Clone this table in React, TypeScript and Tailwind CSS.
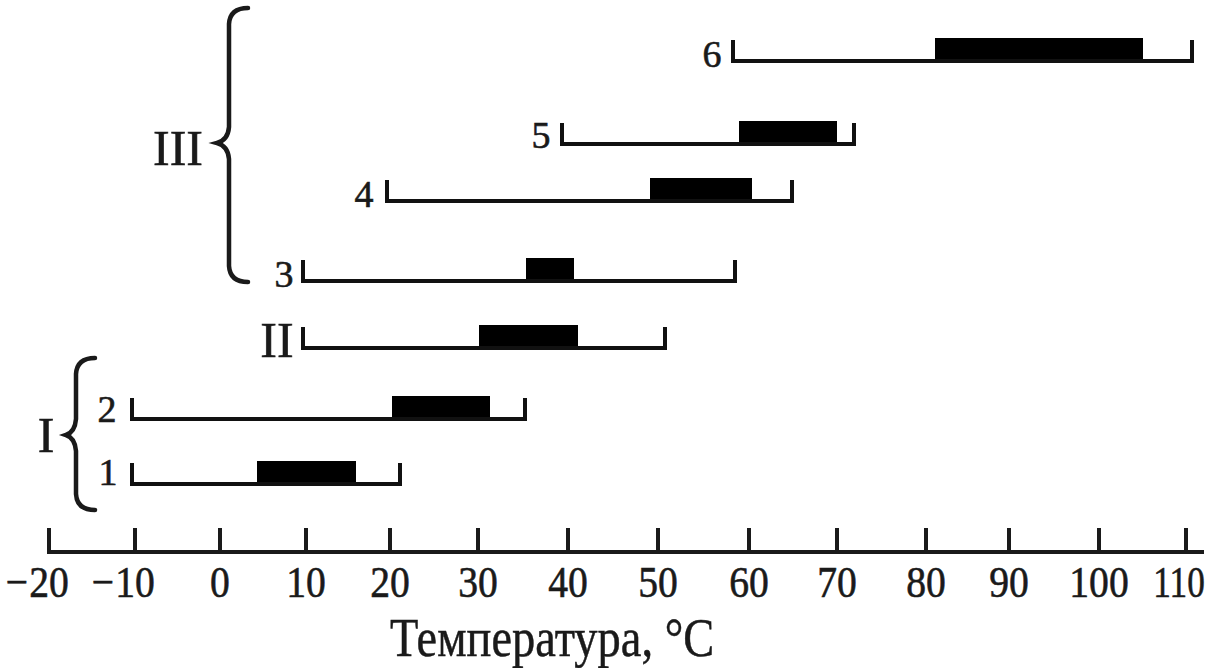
import React from 'react';

const FONT = '"Liberation Serif", "Times New Roman", serif';
const INK = '#1a1a1a';

// x position of each tick on the temperature axis
const ticks: [number, number][] = [
  [-20, 49],
  [-10, 135],
  [0, 220],
  [10, 306],
  [20, 390],
  [30, 478],
  [40, 568],
  [50, 658],
  [60, 749],
  [70, 837],
  [80, 926],
  [90, 1009],
  [100, 1099],
  [110, 1186],
];

interface Row {
  label: string;
  lx: number;
  ly: number;
  size: number;
  y: number;
  left: number;
  right: number;
  bar: [number, number];
}

const rows: Row[] = [
  { label: '6', lx: 712, ly: 67, size: 38, y: 61, left: 733, right: 1192, bar: [935, 1143] },
  { label: '5', lx: 541, ly: 148, size: 38, y: 144, left: 562, right: 854, bar: [739, 837] },
  { label: '4', lx: 364, ly: 207, size: 38, y: 201, left: 387, right: 792, bar: [650, 752] },
  { label: '3', lx: 284, ly: 287, size: 38, y: 281, left: 303, right: 735, bar: [526, 574] },
  { label: 'II', lx: 277, ly: 357, size: 50, y: 348, left: 303, right: 665, bar: [479, 578] },
  { label: '2', lx: 107, ly: 422, size: 38, y: 419, left: 132, right: 525, bar: [392, 490] },
  { label: '1', lx: 108, ly: 485, size: 38, y: 484, left: 132, right: 400, bar: [257, 356] },
];

const Brace: React.FC<{ x: number; tip: number; top: number; mid: number; bottom: number }> = ({
  x,
  tip,
  top,
  mid,
  bottom,
}) => (
  <path
    d={`M ${x + 19} ${top} Q ${x + 1} ${top} ${x} ${top + 16} L ${x} ${mid - 16} Q ${x - 1} ${mid - 3} ${tip} ${mid} Q ${x - 1} ${mid + 3} ${x} ${mid + 16} L ${x} ${bottom - 16} Q ${x + 1} ${bottom} ${x + 19} ${bottom}`}
    fill="none"
    stroke={INK}
    strokeWidth={4.5}
    strokeLinecap="round"
  />
);

export default function App() {
  return (
    <div className="w-[1212px] h-[668px] bg-white overflow-hidden">
      <svg width={1212} height={668} viewBox="0 0 1212 668" className="block" style={{ fontFamily: FONT }}>
        {/* group braces */}
        <Brace x={229} tip={217} top={8} mid={143} bottom={282} />
        <Brace x={76} tip={66} top={358} mid={435} bottom={510} />
        <g fill={INK} stroke={INK} strokeWidth={0.6}>
          <text x={178} y={165} fontSize={50} textAnchor="middle">
            III
          </text>
          <text x={46} y={452} fontSize={50} textAnchor="middle">
            I
          </text>
        </g>

        {/* ranges */}
        {rows.map((r) => (
          <g key={r.label}>
            <text
              x={r.lx}
              y={r.ly}
              fontSize={r.size}
              textAnchor="middle"
              fill={INK}
              stroke={INK}
              strokeWidth={0.6}
            >
              {r.label}
            </text>
            <rect x={r.bar[0]} y={r.y - 23} width={r.bar[1] - r.bar[0]} height={25} fill="#000" />
            <path
              d={`M ${r.left} ${r.y - 21} V ${r.y} H ${r.right} V ${r.y - 21}`}
              fill="none"
              stroke="#111"
              strokeWidth={4}
            />
          </g>
        ))}

        {/* axis */}
        <path d="M 49 528 V 552 H 1204" fill="none" stroke={INK} strokeWidth={4} />
        {ticks.slice(1).map(([, x]) => (
          <line key={x} x1={x} y1={528} x2={x} y2={552} stroke={INK} strokeWidth={4} />
        ))}
        {ticks.map(([v, x]) => (
          <g key={v} fill={INK} stroke={INK} strokeWidth={0.6} fontSize={44}>
            <text
              transform={v === 110 ? `translate(1179 597) scale(0.8 1)` : `translate(${x} 597) scale(0.9 1)`}
              textAnchor="middle"
            >
              {Math.abs(v)}
            </text>
            {v < 0 && (
              <text transform={`translate(${x - 21} 597) scale(0.9 1)`} textAnchor="end">
                −
              </text>
            )}
          </g>
        ))}

        <text
          transform="translate(390 656) scale(0.86 1)"
          fontSize={54}
          fill={INK}
          stroke={INK}
          strokeWidth={0.5}
        >
          Температура, °C
        </text>
      </svg>
    </div>
  );
}
